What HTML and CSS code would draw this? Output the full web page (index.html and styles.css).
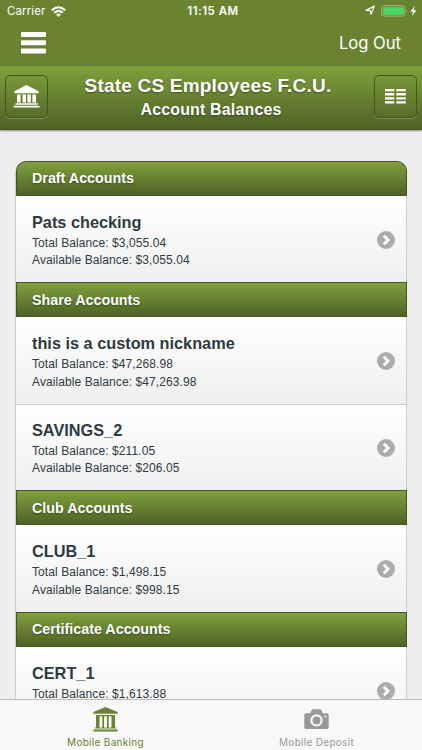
FILE: index.html
```
<!DOCTYPE html>
<html lang="en">
<head>
<meta charset="utf-8">
<title>Account Balances</title>
<link rel="stylesheet" href="styles.css">
</head>
<body>
<svg class="defs" width="0" height="0" aria-hidden="true">
  <symbol id="chevron" viewBox="0 0 18 18"><circle cx="9" cy="9" r="9" fill="#acacac"/><path d="M6.8 4.8 11 9 6.8 13.2" fill="none" stroke="#fff" stroke-width="2.9"/></symbol>
</svg>
<div class="app">
  <div class="topbar">
    <div class="status">
      <div class="carrier"><span>Carrier</span>
        <svg width="15" height="11" viewBox="0 0 15 11"><g fill="none" stroke="#fff" stroke-width="2"><path d="M.8 4.3Q7.5-1.7 14.2 4.3"/><path d="M3.2 6.8Q7.5 3 11.8 6.8"/></g><path d="M5 8.4Q7.5 6.5 10 8.4L7.5 11Z" fill="#fff"/></svg>
      </div>
      <div class="time">11:15 AM</div>
      <div class="indicators">
        <svg width="52" height="12" viewBox="0 0 52 12"><path d="M1 5.4 9.3 1.1 6 9.4 5.4 5.7Z" fill="none" stroke="#fff" stroke-width="1.2" stroke-linejoin="round"/><rect x="16.7" y=".7" width="23.2" height="10.4" rx="2.6" fill="none" stroke="#aab787"/><rect x="18.2" y="2.2" width="20.6" height="7.6" rx="1.2" fill="#4cd964"/><path d="M41.4 4.3Q42.6 6 41.4 7.7Z" fill="#aab787"/><path d="M50 .7 45.4 6.7H48L47 11.2 51.4 5.2H48.8Z" fill="#fff"/></svg>
      </div>
    </div>
    <div class="nav">
      <svg class="menu" width="25" height="22" viewBox="0 0 25 22"><path d="M1 0H24q1 0 1 1V4q0 1-1 1H1Q0 5 0 4V1Q0 0 1 0ZM1 8.2H24q1 0 1 1V12.2q0 1-1 1H1q-1 0-1-1V9.2q0-1 1-1ZM1 16.4H24q1 0 1 1V20.4q0 1-1 1H1q-1 0-1-1V17.4q0-1 1-1Z" fill="#fff"/></svg>
      <span class="logout">Log Out</span>
    </div>
  </div>
  <header class="header">
    <div class="button">
      <svg width="27" height="23" viewBox="0 0 27 23" fill="#fff"><path d="M13.5 0 25.5 6.2V8.2H1.5V6.2ZM4 9.4H7.6V17.6H4ZM9.6 9.4H13V17.6H9.6ZM14.4 9.4H17.8V17.6H14.4ZM19.4 9.4H23V17.6H19.4ZM2.4 18.3H24.8V19.8H2.4ZM.5 20.8H26.5V22.4H.5Z"/></svg>
    </div>
    <div class="heading"><h1>State CS Employees F.C.U.</h1><h2>Account Balances</h2></div>
    <div class="button">
      <svg width="21" height="15" viewBox="0 0 21 15" fill="#fff"><path d="M0 0H9.3V2.3H0ZM11.3 0H20.8V2.3H11.3ZM0 4.1H9.3V6.4H0ZM11.3 4.1H20.8V6.4H11.3ZM0 8.2H9.3V10.5H0ZM11.3 8.2H20.8V10.5H11.3ZM0 12.3H9.3V14.6H0ZM11.3 12.3H20.8V14.6H11.3Z"/></svg>
    </div>
  </header>
  <main class="content">
    <div class="list">
      <h3 class="group"><span>Draft Accounts</span></h3>
      <div class="item"><div><h4>Pats checking</h4><p>Total Balance: $3,055.04</p><p>Available Balance: $3,055.04</p></div><svg class="chevron"><use href="#chevron"/></svg></div>
      <h3 class="group"><span>Share Accounts</span></h3>
      <div class="item"><div><h4>this is a custom nickname</h4><p>Total Balance: $47,268.98</p><p>Available Balance: $47,263.98</p></div><svg class="chevron"><use href="#chevron"/></svg></div>
      <div class="item divided"><div><h4>SAVINGS_2</h4><p>Total Balance: $211.05</p><p>Available Balance: $206.05</p></div><svg class="chevron"><use href="#chevron"/></svg></div>
      <h3 class="group"><span>Club Accounts</span></h3>
      <div class="item"><div><h4>CLUB_1</h4><p>Total Balance: $1,498.15</p><p>Available Balance: $998.15</p></div><svg class="chevron"><use href="#chevron"/></svg></div>
      <h3 class="group"><span>Certificate Accounts</span></h3>
      <div class="item"><div><h4>CERT_1</h4><p>Total Balance: $1,613.88</p></div><svg class="chevron"><use href="#chevron"/></svg></div>
    </div>
  </main>
  <nav class="tabs">
    <div class="tab active">
      <svg width="25" height="25" viewBox="0 0 25 25" fill="currentColor"><path d="M12.5 0 24.6 5.1V6.8H.4V5.1ZM3 8H7V20.4H9V8H11.3V20.4H13.7V8H16V20.4H18V8H22V20.4H23.2V21.6H1.8V20.4H3ZM5.6 9.4V20.4H3V8H22V9.4ZM.4 22.5H24.6V24.5H.4Z"/><path d="M6.5 9.6H9.3V20.2H6.5ZM11.1 9.6H13.9V20.2H11.1ZM15.7 9.6H18.5V20.2H15.7Z" fill="#f8f8f8"/></svg>
      <span>Mobile Banking</span>
    </div>
    <div class="tab">
      <svg width="25" height="25" viewBox="0 0 25 25"><path d="M2 6.2H6.3L7.5 3.3Q7.9 2.3 9 2.3H16Q17 2.3 17.5 3.3L18.7 6.2H23Q24.7 6.2 24.7 8V20.2Q24.7 22 23 22H2Q.3 22 .3 20.2V8Q.3 6.2 2 6.2Z" fill="currentColor"/><circle cx="12.5" cy="13.4" r="5.1" fill="none" stroke="#f8f8f8" stroke-width="2.2"/><circle cx="21.4" cy="9.4" r="1" fill="#f8f8f8"/></svg>
      <span class="deposit">Mobile Deposit</span>
    </div>
  </nav>
</div>
</body>
</html>
```
FILE: styles.css
```
* { box-sizing: border-box; }
body, h1, h2, h3, h4, p { margin: 0; }
body { font-family: "Liberation Sans", Arial, sans-serif; color: #2e3a42; }
svg { display: block; flex: none; }
.defs { position: absolute; }
.app { display: grid; grid-template-rows: 66px 64px 569px 51px; height: 750px; overflow: hidden; background: #eee; }
.topbar { background: #698331; color: #fff; font-family: Inter, sans-serif; }
.status { display: grid; grid-template-columns: 1fr auto 1fr; align-items: center; height: 21px; padding: 1px 5px 0 7px; font-size: 12px; }
.carrier { display: flex; align-items: center; gap: 6px; font-size: 11.5px; letter-spacing: .1px; }
.time { font-size: 11.5px; font-weight: 600; letter-spacing: .5px; padding-left: 2px; }
.indicators { display: flex; justify-content: flex-end; }
.nav { display: flex; justify-content: space-between; align-items: center; height: 44px; padding: 0 21px; }
.logout { font-size: 16.6px; }
.header { z-index: 1; display: flex; justify-content: space-between; padding: 9px 5px 0; color: #fff; background: linear-gradient(#80a03c, #4e6226); border-bottom: 1px solid #43541f; box-shadow: 0 1px 2px #0006; }
.button { display: flex; align-items: center; justify-content: center; width: 43px; height: 43px; border: 1px solid #43551f; border-radius: 5px; box-shadow: 0 1px 0 #ffffff40; }
.heading { text-align: center; text-shadow: 0 1px 2px #0006; white-space: nowrap; }
h1 { padding-right: 6px; font-size: 19px; line-height: 22px; letter-spacing: .2px; }
h2 { margin-top: 3px; font-size: 16px; line-height: 20px; letter-spacing: .15px; }
.content { padding: 30.8px 15px 0; overflow: hidden; }
.list { border: solid #ccc; border-width: 0 1px; border-radius: 12px 12px 0 0; }
.group { display: flex; align-items: center; height: 35px; padding: 0 15px; margin-right: -1px; color: #fff; font-size: 14.3px; text-shadow: 0 1px 2px #0006; background: linear-gradient(#80a03c, #4e6226); border: 1px solid #43541f; }
.group:first-child { border-radius: 10px 10px 0 0; }
.item { display: flex; justify-content: space-between; height: 86.5px; padding: 16px 11px 0 16px; background: linear-gradient(#fff, #efefef); }
.divided { border-top: 1px solid #ccc; padding-top: 15px; }
h4 { margin-bottom: 3px; font-size: 16.3px; line-height: 20px; }
p { font-size: 12px; line-height: 17.5px; letter-spacing: .09px; }
.chevron { width: 18px; height: 18px; margin-top: 19px; }
.tabs { z-index: 1; display: grid; grid-template-columns: 1fr 1fr; background: #f8f8f8; border-top: 1px solid #bbb; }
.tab { display: flex; flex-direction: column; align-items: center; padding-top: 7px; gap: 4px; color: #999; font-family: Inter, sans-serif; font-size: 10px; line-height: 12px; letter-spacing: .3px; }
.active { color: #698331; }
```
